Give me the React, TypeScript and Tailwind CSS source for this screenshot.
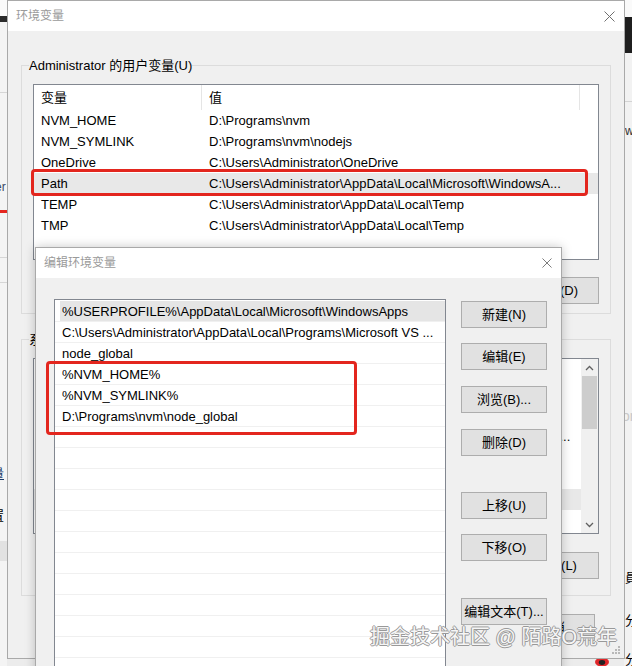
import React from 'react';

const userVars = [
  ['NVM_HOME', 'D:\\Programs\\nvm'],
  ['NVM_SYMLINK', 'D:\\Programs\\nvm\\nodejs'],
  ['OneDrive', 'C:\\Users\\Administrator\\OneDrive'],
  ['Path', 'C:\\Users\\Administrator\\AppData\\Local\\Microsoft\\WindowsA...'],
  ['TEMP', 'C:\\Users\\Administrator\\AppData\\Local\\Temp'],
  ['TMP', 'C:\\Users\\Administrator\\AppData\\Local\\Temp'],
];

const sysVars = [
  ['ComSpec', 'C:\\Windows\\system32\\cmd.exe'],
  ['DriverData', 'C:\\Windows\\System32\\Drivers\\DriverData'],
  ['JAVA_HOME', 'C:\\Program Files\\Java\\jdk1.8.0_201\\jre\\bin;C:\\Program Files\\...'],
  ['NUMBER_OF_PROCESSORS', '8'],
  ['OS', 'Windows_NT'],
  ['Path', 'C:\\Windows\\system32;C:\\Windows'],
  ['PATHEXT', '.COM;.EXE;.BAT;.CMD'],
];

const pathItems = [
  '%USERPROFILE%\\AppData\\Local\\Microsoft\\WindowsApps',
  'C:\\Users\\Administrator\\AppData\\Local\\Programs\\Microsoft VS ...',
  'node_global',
  '%NVM_HOME%',
  '%NVM_SYMLINK%',
  'D:\\Programs\\nvm\\node_global',
];

function CloseX({ size = 11 }: { size?: number }) {
  return (
    <svg width={size} height={size} viewBox="0 0 11 11">
      <path d="M0.5 0.5 L10.5 10.5 M10.5 0.5 L0.5 10.5" stroke="#6f6f6f" strokeWidth="1" fill="none" />
    </svg>
  );
}

function Btn({ children, className = '' }: { children: React.ReactNode; className?: string }) {
  return (
    <div
      className={`h-[27px] w-[86px] shrink-0 border border-[#adadad] bg-[#e1e1e1] flex items-center justify-center text-[13px] text-black ${className}`}
    >
      {children}
    </div>
  );
}

function Chevron({ up }: { up?: boolean }) {
  return (
    <svg width="9" height="6" viewBox="0 0 9 6">
      <path d={up ? 'M1 5 L4.5 1.5 L8 5' : 'M1 1 L4.5 4.5 L8 1'} stroke="#606060" strokeWidth="1.3" fill="none" />
    </svg>
  );
}

export default function App() {
  return (
    <div className="relative w-[632px] h-[666px] overflow-hidden bg-[#ececec] font-['Liberation_Sans','Noto_Sans_CJK_SC',sans-serif] text-black">
      {/* windows behind, left strip */}
      <div className="absolute left-0 top-0 w-[7px] h-full bg-[#f4f4f4] overflow-hidden">
        <div className="h-[16px] bg-[#fafafa]" />
        <div className="h-[6px] bg-[#2b2b2b]" />
        <div className="mt-[70px] h-px bg-[#d6d6d6]" />
        <div className="mt-[87px] text-[12px] leading-[14px] text-[#3a4a66] -ml-[5px]">er</div>
        <div className="mt-[16px] h-[3px] bg-[#e5261f]" />
        <div className="mt-[44px] h-px bg-[#d6d6d6]" />
        <div className="mt-[24px] h-px bg-[#d6d6d6]" />
        <div className="mt-[183px] text-[13px] leading-[15px] -ml-[9px] underline text-[#1a3a6a]">量</div>
        <div className="mt-[27px] text-[13px] leading-[15px] -ml-[9px]">置</div>
        <div className="mt-[18px] h-[20px] bg-[#e2e2e2]" />
      </div>

      {/* windows behind, right strip */}
      <div className="absolute left-[624px] top-0 w-[8px] h-full bg-[#f2f2f2] overflow-hidden">
        <div className="h-[17px] bg-[#fafafa]" />
        <div className="h-[36px] bg-[#1f1f1f]" />
        <div className="mt-[48px] h-px bg-[#d4d4d4]" />
        <div className="mt-[22px] text-[12px] leading-[14px] text-[#333] ml-[1px]">ws</div>
        <div className="mt-[270px] text-[14px] leading-[16px] text-[#c8c8c8] -ml-[2px]">or</div>
        <div className="mt-[146px] text-[13px] leading-[15px] ml-[1px]">員</div>
        <div className="mt-[28px] text-[13px] leading-[15px] ml-[1px]">分</div>
        <div className="mt-[24px] text-[13px] leading-[15px] ml-[1px]">分</div>
      </div>

      {/* red icon below dialog */}
      <svg className="absolute left-[594px] top-[656px]" width="16" height="10" viewBox="0 0 16 10">
        <ellipse cx="8" cy="6" rx="7" ry="4.5" fill="#e0262a" />
        <ellipse cx="8" cy="6.5" rx="3.2" ry="2.4" fill="#222" />
      </svg>

      {/* 环境变量 dialog */}
      <div className="absolute left-[7px] top-0 w-[618px] h-[659px] border border-[#a9a9a9] bg-[#f0f0f0] flex flex-col">
        <div className="h-[30px] bg-white flex items-center justify-between pl-[8px] pr-[9px]">
          <span className="text-[12px] text-[#9a9a9a]">环境变量</span>
          <CloseX />
        </div>

        <div className="flex flex-col px-[13px] pt-[26px]">
          <fieldset className="border border-[#dcdcdc] px-[11px] pb-[9px]">
            <legend className="ml-[-4px] text-[13px] leading-[17px]">Administrator 的用户变量(U)</legend>
            <div className="mt-[10px] h-[176px] border border-[#828790] bg-white text-[13px]">
              <div className="flex h-[25px] items-center">
                <div className="w-[168px] h-full pl-[7px] flex items-center border-r border-[#e5e5e5]">变量</div>
                <div className="w-[378px] h-full pl-[7px] flex items-center border-r border-[#e5e5e5]">值</div>
              </div>
              {userVars.map(([k, v]) => (
                <div
                  key={k}
                  className={`flex h-[21px] leading-[21px] whitespace-nowrap ${k === 'Path' ? 'bg-[#e8e8e8]' : ''}`}
                >
                  <div className="w-[168px] pl-[7px] overflow-hidden">{k}</div>
                  <div className="w-[378px] pl-[7px] overflow-hidden">{v}</div>
                </div>
              ))}
            </div>
            <div className="mt-[17px] flex justify-end gap-[11px]">
              <Btn>新建(N)...</Btn>
              <Btn>编辑(E)...</Btn>
              <Btn>删除(D)</Btn>
            </div>
          </fieldset>

          <fieldset className="mt-[17px] border border-[#dcdcdc] px-[11px] pb-[16px]">
            <legend className="ml-[-4px] text-[13px] leading-[17px]">系统变量(S)</legend>
            <div className="mt-[10px] h-[176px] border border-[#828790] bg-white text-[13px] flex">
              <div className="flex-1 overflow-hidden">
                <div className="flex h-[25px]">
                  <div className="w-[168px] h-full pl-[7px] flex items-center border-r border-[#e5e5e5]">变量</div>
                  <div className="w-[378px] h-full pl-[7px] flex items-center">值</div>
                </div>
                {sysVars.map(([k, v], i) => (
                  <div
                    key={k}
                    className={`flex h-[21px] leading-[21px] whitespace-nowrap ${i === 5 ? 'bg-[#e8e8e8]' : ''}`}
                  >
                    <div className="w-[168px] pl-[7px] overflow-hidden">{k}</div>
                    <div className="w-[378px] pl-[7px] overflow-hidden">{v}</div>
                  </div>
                ))}
              </div>
              <div className="w-[17px] bg-[#f0f0f0] flex flex-col">
                <div className="h-[17px] flex items-center justify-center">
                  <Chevron up />
                </div>
                <div className="mx-[1px] h-[53px] bg-[#cdcdcd]" />
                <div className="flex-1" />
                <div className="h-[17px] flex items-center justify-center">
                  <Chevron />
                </div>
              </div>
            </div>
            <div className="mt-[18px] flex justify-end gap-[11px]">
              <Btn>新建(W)...</Btn>
              <Btn>编辑(I)...</Btn>
              <Btn>删除(L)</Btn>
            </div>
          </fieldset>

          <div className="mt-[18px] mr-[16px] flex justify-end gap-[11px]">
            <Btn>确定</Btn>
            <Btn>取消</Btn>
          </div>
        </div>

        {/* size grip */}
        <svg className="absolute right-[3px] bottom-[3px]" width="10" height="10" viewBox="0 0 10 10" fill="#b8b8b8">
          <rect x="7" y="1" width="2" height="2" />
          <rect x="4" y="4" width="2" height="2" />
          <rect x="7" y="4" width="2" height="2" />
          <rect x="1" y="7" width="2" height="2" />
          <rect x="4" y="7" width="2" height="2" />
          <rect x="7" y="7" width="2" height="2" />
        </svg>
      </div>

      {/* red highlight around Path */}
      <div className="absolute left-[31px] top-[169px] w-[557px] h-[27px] border-[3px] border-[#e3261e] rounded-[4px]" />

      {/* 编辑环境变量 dialog */}
      <div className="absolute left-[35px] top-[247px] w-[527px] h-[440px] border border-[#a9a9a9] bg-[#f0f0f0] shadow-[0_0_10px_rgba(0,0,0,0.22)] flex flex-col">
        <div className="h-[30px] shrink-0 bg-white flex items-center justify-between pl-[8px] pr-[9px]">
          <span className="text-[12px] text-[#9a9a9a]">编辑环境变量</span>
          <CloseX size={10} />
        </div>
        <div className="flex pl-[18px] pt-[21px]">
          <div className="w-[392px] h-[400px] border border-[#828790] bg-white text-[13px] overflow-hidden pt-[1px]">
            {pathItems.map((p, i) => (
              <div key={p} className="h-[21px] border-b border-[#f0f0f0]">
                <div className={`ml-[5px] pl-[2px] h-[20px] leading-[21px] whitespace-nowrap overflow-hidden ${i === 0 ? 'bg-[#e5e5e5]' : ''}`}>
                  {p}
                </div>
              </div>
            ))}
            {Array.from({ length: 14 }).map((_, i) => (
              <div key={i} className="h-[21px] border-b border-[#f0f0f0]" />
            ))}
          </div>
          <div className="ml-[15px] pt-[2px] flex flex-col">
            <Btn>新建(N)</Btn>
            <Btn className="mt-[15px]">编辑(E)</Btn>
            <Btn className="mt-[16px]">浏览(B)...</Btn>
            <Btn className="mt-[16px]">删除(D)</Btn>
            <Btn className="mt-[36px]">上移(U)</Btn>
            <Btn className="mt-[15px]">下移(O)</Btn>
            <Btn className="mt-[37px]">编辑文本(T)...</Btn>
          </div>
        </div>
      </div>

      {/* red highlight around nvm entries */}
      <div className="absolute left-[46px] top-[361px] w-[311px] h-[74px] border-[3px] border-[#e3261e] rounded-[4px]" />

      {/* watermark */}
      <div className="absolute left-[370px] top-[624px] text-[20px] leading-[26px] whitespace-nowrap text-[#f6f6f6] [text-shadow:1px_0_#999,-1px_0_#999,0_1px_#999,0_-1px_#999]">
        掘金技术社区 @ 陌路O荒年
      </div>
    </div>
  );
}
